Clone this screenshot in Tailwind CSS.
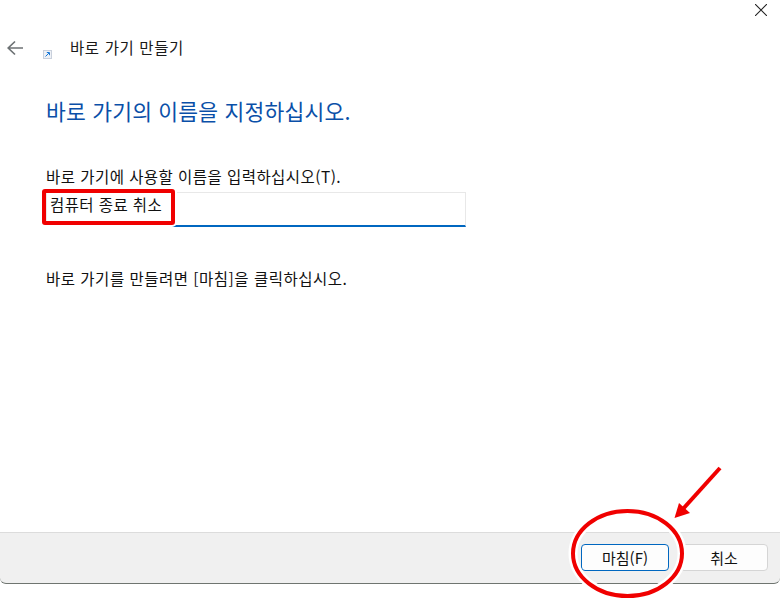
<!DOCTYPE html>
<html lang="ko">
<head>
<meta charset="utf-8">
<script src="https://cdn.jsdelivr.net/npm/@tailwindcss/browser@4"></script>
</head>
<body class="bg-white">
<div class="relative w-[780px] h-[601px] overflow-hidden bg-white flex flex-col font-['Noto_Sans_CJK_KR','Noto_Sans',sans-serif] text-[#111]">
  <main class="h-[532px] flex flex-col">
    <div class="h-[20px] pt-[4px] flex justify-end pr-[13px]">
      <svg class="w-[12px] h-[12px] shrink-0" viewBox="0 0 12 12" fill="none" stroke="#222" stroke-width="1.1"><path d="M0 0 12 12M12 0 0 12"/></svg>
    </div>
    <header class="flex items-center h-[56px] pl-[7px]">
      <svg class="w-[16px] h-[16px] shrink-0" viewBox="0 0 16 16" fill="none" stroke="#6d7274" stroke-width="1.7"><path d="M16 8H1.2M8 1.5 1.2 8 8 14.5"/></svg>
      <svg class="w-[9px] h-[9px] ml-[20px] mt-[12px] shrink-0" viewBox="0 0 9 9"><rect x=".5" y=".5" width="8" height="8" fill="#eef1f6" stroke="#c9d0dc"/><path d="M2.5 6.5 6 3M3.8 2.5H6.5V5.2" fill="none" stroke="#1a78d6" stroke-width="1"/></svg>
      <div class="ml-[18px] mb-[3px] text-[15.5px] tracking-[0.6px] leading-[20px] text-[#1a1a1a]">바로 가기 만들기</div>
    </header>
    <h1 class="ml-[46px] mt-[22px] text-[21.5px] tracking-[0.2px] leading-[26px] font-normal text-[#0a4fa8]">바로 가기의 이름을 지정하십시오.</h1>
    <label class="ml-[46px] mt-[42px] text-[15.5px] tracking-[0.45px] leading-[20px]">바로 가기에 사용할 이름을 입력하십시오(T).</label>
    <div class="ml-[46px] mt-[6px] w-[420px] h-[35px] border border-[#e8e8e8] border-b-2 border-b-[#0067c0] pl-[3px] text-[15.5px] tracking-[0.4px] leading-[22px] flex items-start">컴퓨터 종료 취소</div>
    <p class="ml-[46px] mt-[41px] text-[15.5px] tracking-[0.5px] leading-[20px]">바로 가기를 만들려면 [마침]을 클릭하십시오.</p>
  </main>
  <footer class="h-[52px] bg-[#f0f0f0] border-t border-[#dcdcdc] border-b border-b-[#6f7570] rounded-b-[6px] flex justify-end items-start gap-[11px] pt-[11px] pr-[12px] text-[15px]">
    <button class="w-[88px] h-[27px] rounded-[4px] bg-[#fdfdfd] border border-[#0067c0] leading-[24px]">마침(F)</button>
    <button class="w-[88px] h-[27px] rounded-[4px] bg-[#fdfdfd] border border-[#d5d5d5] leading-[24px]">취소</button>
  </footer>
  <div class="absolute left-[42px] top-[189px] w-[133px] h-[36px] rounded-[3px] border-[4px] border-[#f00000] shadow-[0_0_0_2px_#fff]"></div>
  <svg class="absolute inset-0 w-[780px] h-[601px] pointer-events-none" viewBox="0 0 780 601" fill="none">
    <ellipse cx="627.5" cy="553.5" rx="54.5" ry="42.5" stroke="#fff" stroke-width="9"/>
    <ellipse cx="627.5" cy="553.5" rx="54.5" ry="42.5" stroke="#f00000" stroke-width="4"/>
    <path d="M720 468 682 510" stroke="#f00000" stroke-width="4"/>
    <path d="M674.5 518 679 503 690 513Z" fill="#f00000"/>
  </svg>
</div>
</body>
</html>
